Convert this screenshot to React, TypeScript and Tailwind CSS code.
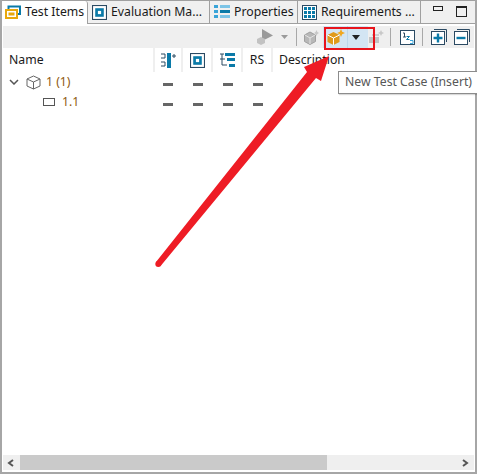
const font = { fontFamily: '"Noto Sans", sans-serif' };

function ViewIcon() {
  return (
    <svg width="16" height="15" viewBox="0 0 16 15" className="shrink-0">
      <path d="M3.5 4V1.5H15V9H13" fill="none" stroke="#0a7aa8" strokeWidth="2" />
      <rect x="1" y="5" width="11" height="8" fill="#fff" stroke="#e8a80c" strokeWidth="2" />
      <rect x="3.5" y="7.5" width="6" height="3" fill="#e8a80c" />
    </svg>
  );
}

function EvalIcon({ size = 15 }: { size?: number }) {
  return (
    <svg width={size} height={size} viewBox="0 0 14 14" className="shrink-0">
      <rect x="0.5" y="0.5" width="13" height="13" fill="#fff" stroke="#2b4a63" />
      <rect x="3" y="3" width="8" height="8" fill="#0a7aa8" />
      <rect x="5.5" y="5.5" width="3" height="3" fill="#fff" />
    </svg>
  );
}

function PropsIcon() {
  return (
    <svg width="16" height="14" viewBox="0 0 16 14" className="shrink-0">
      <rect x="0" y="0" width="4" height="3" fill="#3aa4d8" />
      <rect x="6" y="0" width="10" height="3" fill="#7cc4e6" />
      <rect x="0" y="5" width="4" height="3" fill="#3aa4d8" />
      <rect x="6" y="5" width="10" height="3" fill="#0a7aa8" />
      <rect x="0" y="10" width="4" height="3" fill="#3aa4d8" />
      <rect x="6" y="10" width="10" height="3" fill="#7cc4e6" />
    </svg>
  );
}

function ReqIcon() {
  return (
    <svg width="15" height="15" viewBox="0 0 15 15" className="shrink-0">
      <rect x="0.5" y="0.5" width="14" height="14" fill="#fff" stroke="#2b4a63" />
      {[2, 6, 10].map((x) =>
        [2, 6, 10].map((y) => <rect key={`${x}-${y}`} x={x} y={y} width="3" height="3" fill="#0a7aa8" />)
      )}
    </svg>
  );
}

function Tab({ w, active, icon, label }: { w: string; active?: boolean; icon: React.ReactNode; label: string }) {
  return (
    <div
      className={`${w} flex items-center gap-[4px] pl-[4px] h-full border-r border-[#a0a0a0] text-[12.25px] text-[#1a1a1a] whitespace-nowrap overflow-hidden ${
        active ? 'bg-white rounded-tr-[3px]' : 'bg-[#f0f0f0] border-b'
      }`}
    >
      {icon}
      <span>{label}</span>
    </div>
  );
}

function Sep() {
  return <div className="w-px h-[18px] bg-[#a8a8a8]" />;
}

function Dash() {
  return <div className="w-[10px] h-[3px] bg-[#666]" />;
}

function DashCols() {
  return (
    <div className="absolute left-[163px] top-[2px] h-full flex items-center gap-[20px]">
      <Dash />
      <Dash />
      <Dash />
      <Dash />
    </div>
  );
}

function HeadCell({ w, children }: { w: string; children: React.ReactNode }) {
  return (
    <div className={`${w} h-full flex items-center justify-center border-r-2 border-[#efefef]`}>{children}</div>
  );
}

export default function App() {
  return (
    <div className="relative w-[477px] h-[474px] bg-white overflow-hidden" style={font}>
      <div className="absolute inset-0 border-2 border-t-0 border-[#a6a6a6] pointer-events-none" />

      {/* Tabs */}
      <div className="flex h-[24px] border-t border-[#a0a0a0] bg-[#f0f0f0]">
        <div className="w-[1px] h-full bg-[#a0a0a0]" />
        <Tab w="w-[87px]" active icon={<ViewIcon />} label="Test Items" />
        <Tab w="w-[122px]" icon={<EvalIcon />} label="Evaluation Ma..." />
        <Tab w="w-[88px]" icon={<PropsIcon />} label="Properties" />
        <Tab w="w-[123px]" icon={<ReqIcon />} label="Requirements ..." />
        <div className="flex-1 flex items-start gap-[13px] pl-[12px] pt-[5px] border-b border-[#a0a0a0]">
          <div className="w-[10px] h-[5px] border border-[#222]" />
          <div className="w-[11px] h-[11px] border border-[#222] border-t-2" />
        </div>
      </div>

      {/* Toolbar */}
      <div className="mx-[3px] mt-[2px] h-[22px] bg-[#efefef] flex items-center justify-end">
        <svg width="16" height="16" viewBox="0 0 16 16" className="mr-[8px]">
          <path d="M5 0L16 6.5L5 12Z" fill="#9a9a9a" />
          <path d="M0 10L4 8L8 10V14L4 16L0 14Z" fill="#c2c2c2" />
        </svg>
        <svg width="7" height="4" viewBox="0 0 7 4" className="mr-[8px]">
          <path d="M0 0H7L3.5 4Z" fill="#9a9a9a" />
        </svg>
        <Sep />
        <svg width="15" height="15" viewBox="0 0 15 15" className="ml-[7px] mr-[4px]">
          <path d="M0.5 5L6 2L11.5 5V11.5L6 14.5L0.5 11.5Z" fill="#b8b8b8" stroke="#a0a0a0" />
          <path d="M6 8V14M1 5L6 8L11 5" stroke="#e4e4e4" fill="none" />
          <path d="M12.5 0L13.4 2.1L15 3L13.4 3.9L12.5 6L11.6 3.9L10 3L11.6 2.1Z" fill="#c8c8c8" />
        </svg>
        <div className="w-[45px] h-[22px] bg-[#d3e5f3] flex items-center">
          <svg width="18" height="16" viewBox="0 0 18 16" className="ml-[4px]">
            <path d="M0.5 6L6.5 3L12.5 6V13L6.5 16L0.5 13Z" fill="#e09a1a" />
            <path d="M6.5 9V16M0.5 6L6.5 9L12.5 6" stroke="#fff" fill="none" />
            <path d="M14 0L15.2 2.8L18 4L15.2 5.2L14 8L12.8 5.2L10 4L12.8 2.8Z" fill="#f0a820" />
          </svg>
          <div className="w-px h-full bg-[#bcd6ea] ml-[2px]" />
          <svg width="8" height="5" viewBox="0 0 8 5" className="ml-[4px]">
            <path d="M0 0H8L4 5Z" fill="#222" />
          </svg>
        </div>
        <svg width="15" height="14" viewBox="0 0 15 14" className="ml-[1px] mr-[6px]">
          <path d="M0 7H10V13H0Z" fill="#c4c4c4" />
          <path d="M3 4H10V6H3Z" fill="#cfcfcf" />
          <path d="M12 0L13 2L15 3L13 4L12 6L11 4L9 3L11 2Z" fill="#c8c8c8" />
        </svg>
        <Sep />
        <svg width="15" height="15" viewBox="0 0 15 15" className="ml-[9px] mr-[7px]">
          <rect x="0.5" y="0.5" width="14" height="14" fill="#fff" stroke="#2b4a63" />
          <path d="M3 3H4.5V7M3 7H6" stroke="#2b4a63" fill="none" />
          <path d="M6.5 6.5H9.5L6.5 9.5H9.5" stroke="#0a7aa8" fill="none" />
          <path d="M10 10.5H13V13.5H10" stroke="#3aa4d8" fill="none" />
        </svg>
        <Sep />
        <svg width="16" height="16" viewBox="0 0 16 16" className="ml-[8px] mr-[7px]">
          <path d="M3 0.5H15.5V13" fill="none" stroke="#2b4a63" />
          <rect x="0.5" y="2.5" width="13" height="13" fill="#fff" stroke="#2b4a63" />
          <path d="M2.5 9H11.5M7 4.5V13.5" stroke="#0a7aa8" strokeWidth="2.4" />
        </svg>
        <svg width="16" height="16" viewBox="0 0 16 16" className="mr-[4px]">
          <path d="M3 0.5H15.5V13" fill="none" stroke="#2b4a63" />
          <rect x="0.5" y="2.5" width="13" height="13" fill="#fff" stroke="#2b4a63" />
          <path d="M2.5 9H11.5" stroke="#0a7aa8" strokeWidth="2.4" />
        </svg>
      </div>

      {/* Column headers */}
      <div className="flex h-[24px] items-center ml-[3px] text-[12.25px] text-[#1a1a1a]">
        <div className="w-[150px] pl-[6px]">Name</div>
        <div className="w-[2px] h-full bg-[#efefef]" />
        <HeadCell w="w-[28px]">
          <svg width="15" height="15" viewBox="0 0 15 15">
            <rect x="6" y="0" width="4" height="15" fill="#0a7aa8" />
            <path d="M0 1H4V5H0M0 9H4V13H0" stroke="#2b4a63" fill="none" />
            <path d="M11 3H15M13 1V5" stroke="#2b4a63" />
          </svg>
        </HeadCell>
        <HeadCell w="w-[30px]">
          <EvalIcon />
        </HeadCell>
        <HeadCell w="w-[30px]">
          <svg width="15" height="15" viewBox="0 0 15 15">
            <rect x="5" y="0" width="10" height="3" fill="#0a7aa8" />
            <rect x="7" y="5" width="8" height="3" fill="#0a7aa8" />
            <rect x="9" y="11" width="6" height="3" fill="#0a7aa8" />
            <path d="M0 1H4M0 6H5M2 1V12H7" stroke="#2b4a63" fill="none" />
          </svg>
        </HeadCell>
        <HeadCell w="w-[30px]">RS</HeadCell>
        <div className="pl-[6px]">Description</div>
      </div>

      {/* Tree rows */}
      <div className="relative h-[20px] flex items-center text-[12.25px] text-[#8f5a10]">
        <svg width="10" height="6" viewBox="0 0 10 6" className="ml-[9px]">
          <path d="M1 1L5 5L9 1" fill="none" stroke="#555" strokeWidth="1.5" />
        </svg>
        <svg width="15" height="15" viewBox="0 0 15 15" className="ml-[7px]">
          <path d="M1 4L7.5 1L14 4V11L7.5 14L1 11Z M1 4L7.5 7L14 4M7.5 7V14" fill="none" stroke="#666" />
        </svg>
        <span className="ml-[5px]">1 (1)</span>
        <DashCols />
      </div>
      <div className="relative h-[20px] flex items-center text-[12.25px] text-[#8f5a10]">
        <div className="ml-[43px] w-[12px] h-[8px] border border-[#555] bg-white" />
        <span className="ml-[7px]">1.1</span>
        <DashCols />
      </div>

      {/* Tooltip */}
      <div className="absolute left-[338px] top-[71px] w-[139px] h-[23px] bg-white border border-[#8c8c8c] border-r-0 pl-[6px] flex items-center text-[12.25px] text-[#575757] whitespace-nowrap shadow-[1px_1px_1px_rgba(0,0,0,0.15)]">
        New Test Case (Insert)
      </div>

      {/* Red highlight box */}
      <div className="absolute left-[324px] top-[27px] w-[51px] h-[23px] border-2 border-[#e8141c]" />

      {/* Arrow annotation */}
      <svg className="absolute left-0 top-0 pointer-events-none" width="477" height="474" viewBox="0 0 477 474">
        <circle cx="158.3" cy="264" r="3" fill="#ee1c25" />
        <path d="M156 262L307 72L304 67L329 56L321 81L316 78L160.6 266Z" fill="#ee1c25" />
      </svg>

      {/* Horizontal scrollbar */}
      <div className="absolute left-[3px] right-[3px] top-[455px] h-[15px] bg-[#efefef] flex items-center">
        <svg width="8" height="8" viewBox="0 0 8 8" className="ml-[4px]">
          <path d="M6 1L2 4L6 7" fill="none" stroke="#555" strokeWidth="2" />
        </svg>
        <div className="ml-[5px] w-[307px] h-full bg-[#cacaca]" />
        <svg width="8" height="8" viewBox="0 0 8 8" className="ml-auto mr-[5px]">
          <path d="M2 1L6 4L2 7" fill="none" stroke="#555" strokeWidth="2" />
        </svg>
      </div>
    </div>
  );
}
